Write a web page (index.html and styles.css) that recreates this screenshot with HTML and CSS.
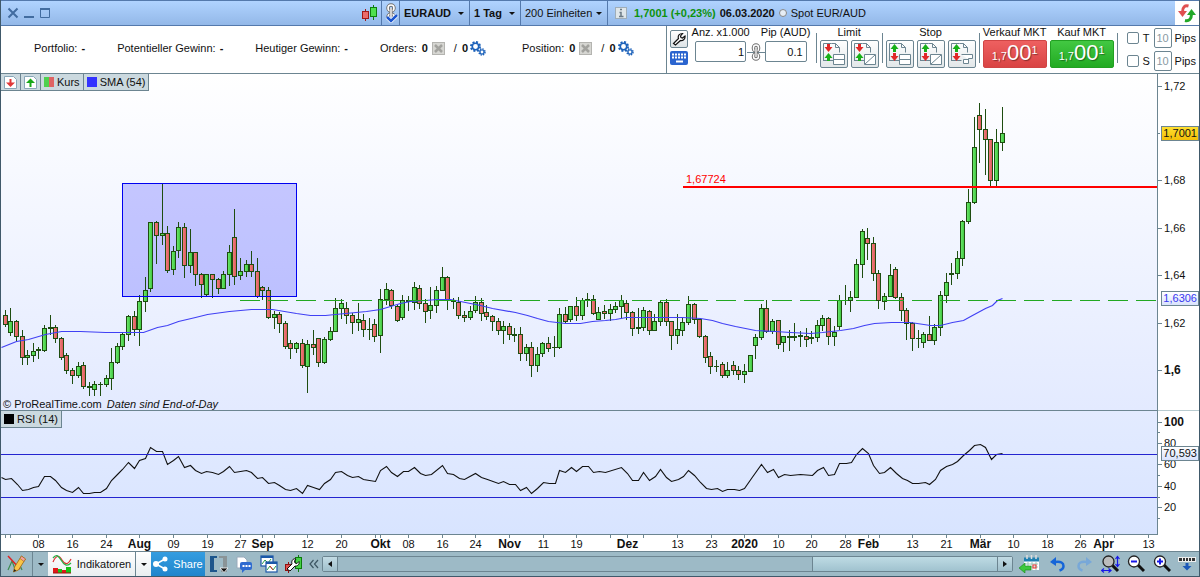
FILE: index.html
```html
<!DOCTYPE html>
<html lang="de">

<head>
    <meta charset="UTF-8">
    <meta name="viewport" content="width=device-width, initial-scale=1.0">
    <title>EURAUD - 1 Tag</title>
    <link rel="stylesheet" href="styles.css">
</head>

<body>
    <div class="window">
        <!-- title bar -->
        <header class="titlebar">
            <div class="win_btns">
                <button aria-label="Schließen"><svg width="12" height="12" viewBox="0 0 12 12"><path d="M1.5 1.5l9 9M10.500 1.500l-9 9" stroke="#426ca0" stroke-width="2"/></svg></button>
                <button aria-label="Minimieren"><svg width="12" height="12" viewBox="0 0 12 12"><path d="M1 10h10" stroke="#426ca0" stroke-width="2"/></svg></button>
                <button aria-label="Maximieren"><svg width="12" height="12" viewBox="0 0 12 12"><path d="M1.500 2v8.500h9V2" fill="none" stroke="#426ca0"/><path d="M1 2h10" stroke="#426ca0" stroke-width="2"/></svg></button>
            </div>
            <svg class="ico_candles" width="18" height="18" viewBox="0 0 18 18">
                <path d="M4.500 5v12" stroke="#a01818"/><rect x="1.500" y="7.500" width="6" height="7" fill="#ea6b6b" stroke="#a01818"/>
                <path d="M12.500 1v15" stroke="#0f7f0f"/><rect x="9.500" y="3.500" width="6" height="9" fill="#4fe04f" stroke="#0f7f0f"/>
            </svg>
            <button class="cell link_cell" aria-label="Verknüpfen">
                <svg width="16" height="20" viewBox="0 0 16 20">
                    <rect x="5" y="2" width="6" height="6" rx="3" fill="none" stroke="#6f6f6f" stroke-width="3.500"/>
                    <rect x="5" y="2" width="6" height="6" rx="3" fill="none" stroke="#fff" stroke-width="1.600"/>
                    <rect x="5" y="11" width="6" height="6" rx="3" fill="none" stroke="#6f6f6f" stroke-width="3.500"/>
                    <rect x="5" y="11" width="6" height="6" rx="3" fill="none" stroke="#fff" stroke-width="1.600"/>
                    <path d="M8 5v9" stroke="#6f6f6f" stroke-width="3"/><path d="M8 5v9" stroke="#fff" stroke-width="1.400"/>
                    <path d="M4 14l4 4 6-6" fill="none" stroke="#fff" stroke-width="4"/>
                    <path d="M4 14l4 4 6-6" fill="none" stroke="#1a55cf" stroke-width="2.500"/>
                </svg>
            </button>
            <button class="cell bold symbol">EURAUD <i class="arrow"></i></button>
            <button class="cell bold period">1 Tag <i class="arrow"></i></button>
            <button class="cell units">200 Einheiten <i class="arrow"></i></button>
            <div class="cell quote">
                <svg width="12" height="12" viewBox="0 0 12 12"><rect x=".5" y=".5" width="11" height="11" fill="#dfe6ea" stroke="#9fadb8"/><path d="M5 2.500h2M4.500 5.500H6v4M4 9.500h4.500" fill="none" stroke="#6b7a85" stroke-width="1.500"/></svg>
                <b class="up">1,7001 (+0,23%)</b>
                <b>06.03.2020</b>
                <i class="dot"></i>
                <span>Spot EUR/AUD</span>
            </div>
            <button class="refresh" aria-label="Aktualisieren">
                <svg width="20" height="20" viewBox="0 0 20 20">
                    <path d="M11.500 3C8 2 5.500 4 5.500 9" fill="none" stroke="#e05050" stroke-width="3"/><path d="M1 8h9l-4.500 6z" fill="#e05050"/>
                    <path d="M8 17.500c4 1 6.500-1.500 6.500-6.500" fill="none" stroke="#22a828" stroke-width="3"/><path d="M10 12h9l-4.500-6z" fill="#22a828"/>
                </svg>
            </button>
        </header>

        <!-- account and order bar -->
        <div class="toolbar">
            <div class="stats">
                <div>Portfolio: <b>-</b></div>
                <div>Potentieller Gewinn: <b>-</b></div>
                <div>Heutiger Gewinn: <b>-</b></div>
                <div class="stat_ico">Orders: <b>0</b>
                    <svg width="13" height="13"><use href="#ico_cancel"/></svg>
                    <span class="slash">/</span><b>0</b><svg class="gears" width="16" height="15"><use href="#ico_gears"/></svg>
                </div>
                <div class="stat_ico">Position: <b>0</b>
                    <svg width="13" height="13"><use href="#ico_cancel"/></svg>
                    <span class="slash">/</span><b>0</b><svg class="gears" width="16" height="15"><use href="#ico_gears"/></svg>
                </div>
            </div>
            <div class="trade">
                <div class="tools">
                    <button class="sq" aria-label="Einstellungen"><svg width="14" height="14" viewBox="0 0 14 14"><path d="M1.500 11.500L6.500 6.500C5.500 3.500 7.500 1.500 10.500 1.500L8.500 4l.5 1.500 1.500.5L13 4c.5 3-2 5-4.500 4.500l-5 4.500z" fill="#fff" stroke="#111" stroke-width="1.200"/></svg></button>
                    <button class="keys" aria-label="Tastatur"><svg width="14" height="10" viewBox="0 0 14 10"><path d="M0 1.500h14M0 4.500h14" stroke="#fff" stroke-width="2" stroke-dasharray="2 1"/><path d="M4 8.500h7" stroke="#fff" stroke-width="2"/></svg></button>
                </div>
                <div class="field qty"><label for="qty">Anz. x1.000</label><input id="qty" type="text" value="1"></div>
                <svg class="chain" width="18" height="20" viewBox="0 0 18 20">
                    <path d="M0 10.500h18" stroke="#6c8591"/>
                    <rect x="6.500" y="3" width="5" height="6" rx="2.500" fill="none" stroke="#6f6f6f" stroke-width="3.500"/><rect x="6.500" y="3" width="5" height="6" rx="2.500" fill="none" stroke="#fff" stroke-width="1.500"/>
                    <rect x="6.500" y="12" width="5" height="5" rx="2.500" fill="none" stroke="#6f6f6f" stroke-width="3.500"/><rect x="6.500" y="12" width="5" height="5" rx="2.500" fill="none" stroke="#fff" stroke-width="1.500"/>
                    <path d="M9 6v8" stroke="#6f6f6f" stroke-width="3"/><path d="M9 6v8" stroke="#fff" stroke-width="1.300"/>
                </svg>
                <div class="field pip"><label for="pip">Pip (AUD)</label><input id="pip" type="text" value="0.1"></div>
                <div class="group">
                    <span class="cap">Limit</span>
                    <div class="row">
                        <button class="ord" aria-label="Limit"><svg viewBox="0 0 26 26"><use href="#ico_page"/><use href="#ico_down_up"/><use href="#ico_line"/></svg></button>
                        <button class="ord" aria-label="Limit diagonal"><svg viewBox="0 0 26 26"><use href="#ico_page"/><use href="#ico_down_up"/><use href="#ico_diag"/></svg></button>
                    </div>
                </div>
                <div class="group">
                    <span class="cap">Stop</span>
                    <div class="row">
                        <button class="ord" aria-label="Stop"><svg viewBox="0 0 26 26"><use href="#ico_page"/><use href="#ico_up_down"/><use href="#ico_line"/></svg></button>
                        <button class="ord" aria-label="Stop diagonal"><svg viewBox="0 0 26 26"><use href="#ico_page"/><use href="#ico_up_down"/><use href="#ico_diag"/></svg></button>
                        <button class="ord" aria-label="Trailing Stop"><svg viewBox="0 0 26 26"><use href="#ico_page"/><use href="#ico_up_down"/><use href="#ico_step"/></svg></button>
                    </div>
                </div>
                <div class="group market">
                    <div class="col">
                        <label class="cap" for="sell">Verkauf MKT</label>
                        <button id="sell" class="mkt sell">1,7<strong>00</strong><sup>1</sup></button>
                    </div>
                    <div class="col">
                        <label class="cap" for="buy">Kauf MKT</label>
                        <button id="buy" class="mkt buy">1,7<strong>00</strong><sup>1</sup></button>
                    </div>
                </div>
                <div class="group pips">
                    <div class="pip_row"><input id="chk_t" type="checkbox"><label for="chk_t">T</label><input id="pip_t" type="text" value="10"><label for="pip_t">Pips</label></div>
                    <div class="pip_row"><input id="chk_s" type="checkbox"><label for="chk_s">S</label><input id="pip_s" type="text" value="10"><label for="pip_s">Pips</label></div>
                </div>
            </div>
        </div>

        <!-- price chart -->
        <section class="panel price">
            <div class="plot">
                <svg id="price_plot" viewBox="1 74 1156 336" preserveAspectRatio="none"></svg>
                <div class="legend">
                    <button aria-label="Nach unten"><svg width="13" height="13" viewBox="0 0 13 13"><path d="M.500.500h9l3 3v9H.500z" fill="#fff" stroke="#89a7b8"/><path d="M6.500 3v5" stroke="#e03838" stroke-width="2"/><path d="M2 6.500h9l-4.500 4.500z" fill="#e03838"/></svg></button>
                    <button aria-label="Nach oben"><svg width="13" height="13" viewBox="0 0 13 13"><path d="M.500.500h9l3 3v9H.500z" fill="#fff" stroke="#89a7b8"/><path d="M6.500 6v5" stroke="#18a818" stroke-width="2"/><path d="M2 7h9L6.500 2.500z" fill="#18a818"/></svg></button>
                    <span><i class="key key_kurs"></i>Kurs</span>
                    <span><i class="key key_sma"></i>SMA (54)</span>
                </div>
                <p class="copy">© ProRealTime.com <em>Daten sind End-of-Day</em></p>
            </div>
            <div class="axis">
                <svg id="price_axis"></svg>
                <span class="tag tag_last">1,7001</span>
                <span class="tag tag_sma">1,6306</span>
            </div>
        </section>

        <!-- RSI -->
        <section class="panel rsi">
            <div class="plot">
                <svg id="rsi_plot" viewBox="1 411 1156 123" preserveAspectRatio="none"></svg>
                <div class="legend"><span><i class="key key_rsi"></i>RSI (14)</span></div>
            </div>
            <div class="axis">
                <svg id="rsi_axis"></svg>
                <span class="tag tag_rsi">70,593</span>
            </div>
        </section>

        <div class="dates"><svg id="date_axis"></svg></div>

        <!-- bottom bar -->
        <footer class="bottombar">
            <button class="draw" aria-label="Zeichnen"><svg width="20" height="18" viewBox="0 0 20 18"><path d="M1 15l4-9 3 8 4-6 3 7" fill="none" stroke="#3c8c50" stroke-width="1.200"/><path d="M1 1l12 13" stroke="#dd2222" stroke-width="1.500"/><path d="M14.500 1l4 3-7 11-5 2 1-5z" fill="#f9c548" stroke="#9a6410" stroke-width=".8"/><path d="M14.500 1l4 3-1.500 2.500-4-3z" fill="#f3a0a0" stroke="#9a6410" stroke-width=".6"/><path d="M6.500 17l.8-3 2 1.500z" fill="#222"/></svg></button>
            <button class="drop" aria-label="Zeichenwerkzeuge"><i class="arrow"></i></button>
            <button class="indi"><svg width="20" height="20" viewBox="0 0 20 20"><path d="M1 8C4 1 7 1 10 6s6 5 9-1" fill="none" stroke="#dd3030" stroke-width="1.200"/><path d="M1 4c3-4 5-3 8 2s6 7 10 3" fill="none" stroke="#28b048" stroke-width="1.300"/><path d="M1 19v-5h5v5M10 19v-3h4v3" fill="#e01818"/><path d="M6 19v-4h4v4M14 19v-6h5v6" fill="#18c018"/><path d="M1 19h18" stroke="#a01010"/></svg>Indikatoren</button>
            <button class="drop light" aria-label="Indikatorliste"><i class="arrow"></i></button>
            <button class="share"><svg width="15" height="16" viewBox="0 0 15 16"><path d="M12 3L3 8l9 5" fill="none" stroke="#fff" stroke-width="1.500"/><circle cx="12" cy="3" r="2.500" fill="#fff"/><circle cx="3" cy="8" r="3" fill="#fff"/><circle cx="12" cy="13" r="2.500" fill="#fff"/></svg>Share</button>
            <div class="icons">
                <button aria-label="Ansicht"><svg width="19" height="18" viewBox="0 0 19 18"><path d="M8 1H1v16h7v-2H5V3h3z" fill="#1d568c"/><path d="M10 1h8v16h-6v-2h2V3h-4z" fill="#8a9497"/><path d="M11 13h8l-4 4.500z" fill="#111" stroke="#fff" stroke-width=".8"/></svg></button>
                <button aria-label="Kommentar"><svg width="16" height="17" viewBox="0 0 16 17"><path d="M1 1h7l3 3v8H1z" fill="#fff" stroke="#9ab"/><rect x="4" y="6" width="12" height="8" rx="2" fill="#2f6bd0"/><path d="M6 13v4l4-4z" fill="#2f6bd0"/><path d="M6.500 10h8" stroke="#fff" stroke-width="2" stroke-dasharray="2 1"/></svg></button>
                <button aria-label="Fenster"><svg width="18" height="18" viewBox="0 0 18 18"><rect x="1" y="1" width="12" height="10" fill="#fff" stroke="#1c58a8" stroke-width="1.200"/><path d="M1 2h12" stroke="#1c58a8" stroke-width="2"/><path d="M2 9l3-4 3 3 3-4" fill="none" stroke="#28a048"/><rect x="6" y="7" width="11" height="10" fill="#fff" stroke="#1c58a8" stroke-width="1.200"/><path d="M6 8h11" stroke="#1c58a8" stroke-width="2"/><path d="M7 15l3-4 3 4 3-4" fill="none" stroke="#28a048"/><path d="M10 11l3 4" stroke="#dd3030"/></svg></button>
                <button aria-label="Handel"><svg width="17" height="18" viewBox="0 0 17 18"><path d="M3.500 7v11" stroke="#901010"/><rect x=".5" y="9.500" width="5" height="6" fill="#e05050" stroke="#901010"/><path d="M13.500 0v17" stroke="#0c7c0c"/><rect x="10.500" y="2.500" width="6" height="11" fill="#45d045" stroke="#0c7c0c"/><path d="M2 14l5-5c-1-3 1-6 4-5L9.500 6l.5 2 2 .5 2-2c1 3-2 5-4 4.500l-5 5z" fill="#fff" stroke="#111"/></svg></button>
                <button class="fold" aria-label="Einklappen"><svg width="10" height="10" viewBox="0 0 10 10"><path d="M4.500 1L1 5l3.500 4M9 1L5.500 5 9 9" fill="none" stroke="#3d5663" stroke-width="1.200"/></svg></button>
            </div>
            <div class="scroll">
                <button aria-label="Zurück"><i class="tri_left"></i></button>
                <div class="track"><div class="thumb"></div></div>
                <button aria-label="Vor"><i class="tri_right"></i></button>
            </div>
            <div class="nav">
                <button aria-label="Datum"><svg width="21" height="18" viewBox="0 0 21 18"><rect x="5" y="3" width="15" height="12" fill="#fff"/><path d="M5 4.500h15" stroke="#2080b0" stroke-width="4"/><path d="M8 0v4M12.500 0v4M17 0v4" stroke="#ddd" stroke-width="1.500"/><path d="M6 9h13M6 12h13M9 7v8M13 7v8M17 7v8" stroke="#8ba" stroke-width=".8"/><rect x="14" y="10" width="3" height="3" fill="none" stroke="#e33"/><path d="M0 13l6-5v3h6v4H6v3z" fill="#3cc83c" stroke="#178817" stroke-width=".6"/></svg></button>
                <button aria-label="Rückgängig"><svg width="16" height="16" viewBox="0 0 16 16"><path d="M5 6c6-1 8.500 1 8.500 4 0 2-1 3.500-4 4.500" fill="none" stroke="#1665d8" stroke-width="2.500"/><path d="M0 6l6-5v9z" fill="#1665d8"/></svg></button>
                <button aria-label="Wiederholen"><svg width="16" height="16" viewBox="0 0 16 16"><path d="M11 6c-6-1-8.500 1-8.500 4 0 2 1 3.500 4 4.500" fill="none" stroke="#78a8d8" stroke-width="2.500"/><path d="M16 6l-6-5v9z" fill="#78a8d8"/></svg></button>
                <button aria-label="Zoom anpassen"><svg width="19" height="18" viewBox="0 0 19 18"><path d="M11 10l6 6" stroke="#111" stroke-width="3"/><circle cx="7.500" cy="6.500" r="5.500" fill="#bcbcbc" stroke="#222" stroke-width="1.300"/><path d="M16.500 2v9M14.500 4l2-2.500 2 2.500M14.500 9l2 2.500 2-2.500M1 15.500h8M3 13.500l-2.500 2 2.500 2M7.500 13.500l2.500 2-2.500 2" fill="none" stroke="#1717e8" stroke-width="1.200"/></svg></button>
                <button aria-label="Verkleinern"><svg width="18" height="18" viewBox="0 0 18 18"><path d="M11 10l6 6" stroke="#111" stroke-width="3"/><circle cx="7" cy="6.500" r="5.500" fill="#fff" stroke="#222" stroke-width="1.300"/><path d="M4 6.500h6" stroke="#1717e8" stroke-width="2"/></svg></button>
                <button aria-label="Vergrößern"><svg width="18" height="18" viewBox="0 0 18 18"><path d="M11 10l6 6" stroke="#111" stroke-width="3"/><circle cx="7" cy="6.500" r="5.500" fill="#fff" stroke="#222" stroke-width="1.300"/><path d="M4 6.500h6M7 3.500v6" stroke="#1717e8" stroke-width="2"/></svg></button>
                <button aria-label="Leiste ausblenden"><svg width="18" height="14" viewBox="0 0 18 14"><rect x=".5" y=".5" width="17" height="4" fill="#333" stroke="#eee"/><path d="M4.500 1v3M7.500 1v3M10.500 1v3M13.500 1v3" stroke="#eee"/><path d="M9 6v4" stroke="#1c58b8" stroke-width="3"/><path d="M4.500 9h9L9 13.500z" fill="#1c58b8"/></svg></button>
            </div>
        </footer>
    </div>

    <!-- shared icons -->
    <svg class="defs" width="0" height="0">
        <defs>
            <symbol id="ico_cancel" viewBox="0 0 13 13"><rect x=".5" y=".5" width="12" height="12" fill="#d6d6d2" stroke="#b4b4b0"/><path d="M3 3l7 7M10 3l-7 7" stroke="#a2a29e" stroke-width="2.500"/></symbol>
            <symbol id="ico_gears" viewBox="0 0 16 15"><circle cx="5.500" cy="5.500" r="4.500" fill="none" stroke="#1d62ba" stroke-width="2" stroke-dasharray="2 1.530"/><circle cx="5.500" cy="5.500" r="3.200" fill="#fff" stroke="#1d62ba" stroke-width="1.600"/><circle cx="12" cy="11" r="3" fill="none" stroke="#1d62ba" stroke-width="1.500" stroke-dasharray="1.400 .95"/><circle cx="12" cy="11" r="2" fill="#fff" stroke="#1d62ba" stroke-width="1.200"/></symbol>
            <g id="ico_page"><path d="M10.500 2.500h4l4 4v5M14.500 2.500v4h4M2.500 20V2.500h8M2.500 19.500h10" fill="none" stroke="#6c8591"/></g>
            <g id="ico_down_up"><path d="M7.500 3v4" stroke="#e02828" stroke-width="3"/><path d="M3.500 6h8l-4 5z" fill="#e02828"/><path d="M7.500 16v4" stroke="#18b018" stroke-width="3"/><path d="M3.500 17h8l-4-5z" fill="#18b018"/></g>
            <g id="ico_up_down"><path d="M7.500 7v4" stroke="#18b018" stroke-width="3"/><path d="M3.500 8h8l-4-5z" fill="#18b018"/><path d="M7.500 12v4" stroke="#e02828" stroke-width="3"/><path d="M3.500 15h8l-4 5z" fill="#e02828"/></g>
            <g id="ico_line"><path d="M12.500 13.500h11v10h-11zM12 18.500h12" fill="#fff" stroke="#6c8591"/></g>
            <g id="ico_diag"><path d="M12.500 13.500h11v10h-11zM13 23L23 14" fill="#fff" stroke="#6c8591"/></g>
            <g id="ico_step"><path d="M12.500 13.500h11v4h-4v5h-5v-4h5" fill="#fff" stroke="#6c8591"/></g>
        </defs>
    </svg>
    <script src="chart.js"></script>
</body>

</html>
```
FILE: styles.css
```css
* {
    box-sizing: border-box;
    margin: 0;
    padding: 0;
}

body {
    font-family: "Liberation Sans", Arial, sans-serif;
    font-size: 11px;
    line-height: 13px;
    color: #111;
    background-color: #fff;
}

button,
input {
    font: inherit;
    color: inherit;
}

button {
    display: flex;
    align-items: center;
    justify-content: center;
    border: 0;
    background: none;
    white-space: nowrap;
}

svg {
    display: block;
    flex-shrink: 0;
}

.defs {
    position: absolute;
}

.window {
    display: flex;
    flex-direction: column;
    min-height: 100vh;
    border-left: 1px solid #40596a;
    border-right: 1px solid #40596a;
}

.arrow {
    border: 3px solid transparent;
    border-top-color: #111;
    border-bottom: 0;
}

/* title bar */
.titlebar {
    display: flex;
    height: 26px;
    border-top: 1px solid #5479ac;
    border-bottom: 1px solid #5479ac;
    background-image: linear-gradient(#b0d3ff, #93b8e8);
}

.win_btns {
    display: flex;
    align-items: center;
    gap: 4px;
    padding-left: 6px;
    flex: 1;
}

.ico_candles {
    margin: 3px 2px 0 0;
}

.cell {
    border-left: 1px solid #5479ac;
    padding: 0 5px 0 4px;
    justify-content: space-between;
}

.link_cell {
    width: 18px;
    padding: 0;
    justify-content: center;
}

.bold {
    font-weight: bold;
}

.symbol {
    width: 70px;
}

.period {
    width: 51px;
}

.units {
    width: 87px;
}

.quote {
    display: flex;
    align-items: center;
    justify-content: flex-start;
    gap: 4px;
    width: 568px;
    padding-left: 7px;
}

.quote .up {
    color: #0d920d;
    padding-left: 3px;
}

.dot {
    width: 8px;
    height: 8px;
    border: 1px solid #888;
    border-radius: 50%;
    background-color: #e6edf5;
}

.refresh {
    width: 24px;
    background-color: #fff;
}

/* order bar */
.toolbar {
    display: flex;
    justify-content: space-between;
    height: 48px;
    border-bottom: 1px solid #6c8591;
}

.stats {
    display: flex;
    align-items: center;
    gap: 32px;
    padding: 0 0 2px 33px;
    white-space: nowrap;
}

.stats b {
    margin-left: 1px;
}

.stat_ico {
    display: flex;
    align-items: center;
    gap: 4px;
}

.stat_ico + .stat_ico {
    margin-left: 4px;
}

.slash {
    margin-left: 5px;
}

.stat_ico .gears {
    margin-left: -2px;
}

.trade {
    display: flex;
    border-left: 1px solid #6c8591;
    padding-left: 3px;
    white-space: nowrap;
}

.tools {
    display: flex;
    flex-direction: column;
    gap: 3px;
    width: 18px;
    margin-right: 3px;
    padding-top: 4px;
}

.sq {
    height: 18px;
    border: 1px solid #6c8591;
    border-radius: 2px;
    background-image: linear-gradient(#fff, #dde3e6);
}

.keys {
    height: 14px;
    border-radius: 2px;
    background-color: #2a64cf;
}

.field {
    display: flex;
    flex-direction: column;
    align-items: center;
    gap: 2px;
}

.field input {
    height: 21px;
    border: 1px solid #6c8591;
    border-radius: 2px;
    text-align: right;
    padding-right: 3px;
}

.field.qty {
    width: 60px;
}

.field.qty input {
    width: 51px;
    padding-right: 1px;
}

.field.pip {
    width: 50px;
}

.field.pip input {
    width: 42px;
}

.chain {
    margin: 16px -4px 0;
}

.group {
    position: relative;
    display: flex;
    flex-direction: column;
    gap: 1px;
    padding: 0 3px;
    margin-left: 1px;
}

.pip + .group {
    margin-left: 6px;
}

/* divider left of each group */
.group::before {
    content: "";
    position: absolute;
    left: -1px;
    top: 7px;
    bottom: 10px;
    width: 1px;
    background-color: #6c8591;
}

.cap {
    text-align: center;
}

.row {
    display: flex;
    gap: 3px;
}

.ord {
    width: 28px;
    height: 28px;
    border: 1px solid #6c8591;
    border-radius: 2px;
    background-image: linear-gradient(#fff, #e2e7e9);
}

.ord svg {
    width: 26px;
    height: 26px;
}

.group.market {
    flex-direction: row;
    gap: 3px;
}

.col {
    display: flex;
    flex-direction: column;
    gap: 1px;
    width: 64px;
    align-items: center;
}

.mkt {
    width: 64px;
    height: 28px;
    align-items: baseline;
    border-radius: 2px;
    color: #fff;
    text-shadow: 1px 1px 1px rgba(0, 0, 0, 0.4);
}

.mkt strong {
    font-size: 22px;
    line-height: 24px;
    font-weight: normal;
}

.mkt sup {
    align-self: flex-start;
    padding-top: 3px;
    font-size: 11px;
}

.sell {
    border: 1px solid #d04545;
    background-image: linear-gradient(#ee6060, #d94444);
}

.buy {
    border: 1px solid #22a022;
    background-image: linear-gradient(#42c842, #22aa22);
}

.group.pips {
    gap: 3px;
    padding: 2px 3px 0 9px;
}

.pip_row {
    display: flex;
    align-items: center;
    gap: 3px;
    height: 20px;
}

.pip_row input[type="checkbox"] {
    appearance: none;
    width: 12px;
    height: 12px;
    border: 1px solid #6c8591;
    border-radius: 2px;
}

.pip_row input[type="text"] {
    width: 18px;
    height: 20px;
    border: 1px solid #6c8591;
    border-radius: 2px;
    color: #8a9aa3;
    text-align: center;
}

.pip_row label:first-of-type {
    width: 9px;
    text-align: center;
}

/* chart panels */
.panel {
    display: grid;
    grid-template-columns: 1fr 41px;
    min-height: 0;
}

.price {
    flex: 337 1 0;
}

.rsi {
    flex: 124 1 0;
}

.plot {
    position: relative;
    border-right: 1px solid #6c8591;
    border-bottom: 1px solid #6c8591;
}

.price .plot {
    background-image: linear-gradient(#fff, #e3eaff);
}

.rsi .plot {
    background-image: linear-gradient(#e3ebff, #d8e4ff);
}

.plot > svg,
.axis > svg,
.dates > svg {
    position: absolute;
    width: 100%;
    height: 100%;
}

.axis {
    position: relative;
    margin-bottom: 1px;
}

.price .axis {
    margin-bottom: 0;
    border-bottom: 1px solid #b8cbd0;
}

.axis text,
.dates text {
    font-size: 11px;
    fill: #111;
}

.axis .major,
.dates .major {
    font-size: 12px;
    font-weight: bold;
}

.dates text {
    text-anchor: middle;
}

.price_level {
    font-size: 11px;
    fill: #f00;
}

.legend {
    position: absolute;
    top: 0;
    left: 0;
    display: flex;
}

.legend > * {
    display: flex;
    align-items: center;
    height: 17px;
    padding: 0 3px;
    border-right: 1px solid #6c8591;
    border-bottom: 1px solid #6c8591;
    background-color: #cbd9df;
}

.key {
    width: 10px;
    height: 10px;
    margin-right: 3px;
}

.key_kurs {
    background-image: linear-gradient(90deg, #4fd04f 50%, #df6464 50%);
}

.key_sma {
    background-color: #3333ff;
}

.key_rsi {
    background-color: #000;
}

.copy {
    position: absolute;
    left: 2px;
    bottom: -1px;
}

.copy em {
    margin-left: 2px;
}

.tag {
    position: absolute;
    right: 0;
    height: 15px;
    padding: 0 1px;
    border: 1px solid #6c8591;
    background-image: linear-gradient(#fff, #d8e2fc);
}

.tag_last {
    top: 15.5%;
    background-image: linear-gradient(#ffdf30, #f3bf08);
}

.tag_sma {
    top: 64.6%;
    color: #3838f0;
}

.tag_rsi {
    top: 28.5%;
}

.dates {
    position: relative;
    height: 17px;
    margin-right: 41px;
}

/* bottom bar */
.bottombar {
    display: flex;
    height: 26px;
    margin-top: -1px;
    border-top: 1px solid #6c8591;
    border-bottom: 1px solid #40596a;
    background-color: #9dbac6;
    position: relative;
}

.draw {
    width: 32px;
    border-right: 1px solid #6c8591;
}

.drop {
    width: 15px;
}

.indi {
    width: 88px;
    gap: 5px;
    border-right: 1px solid #6c8591;
}

.indi,
.light {
    background-image: linear-gradient(#fff, #e9eef0);
}

.share {
    width: 54px;
    gap: 5px;
    color: #fff;
    background-image: linear-gradient(#359de0, #2085cc);
}

.icons {
    display: flex;
    padding-left: 1px;
}

.icons button {
    width: 25px;
}

.icons .fold {
    width: 16px;
}

.scroll {
    display: flex;
    flex: 1;
    height: 16px;
    margin: 4px 0 0;
    border: 1px solid #6c8591;
    border-radius: 2px;
}

.scroll button {
    width: 14px;
    background-image: linear-gradient(#c2dbe4, #9fbfcb);
}

.tri_left {
    border: 3px solid transparent;
    border-right: 4px solid #111;
    border-left: 0;
}

.tri_right {
    border: 3px solid transparent;
    border-left: 4px solid #111;
    border-right: 0;
}

.track {
    display: flex;
    justify-content: flex-end;
    flex: 1;
    border-left: 1px solid #6c8591;
    border-right: 1px solid #6c8591;
}

.thumb {
    width: 28%;
    border-left: 1px solid #6c8591;
    background-image: linear-gradient(#bedbe4, #a0c2cf);
}

.nav {
    display: flex;
}

.nav button {
    width: 26px;
}

.nav button:first-child {
    width: 32px;
}

.nav button:last-child {
    width: 24px;
}
```
FILE: chart.js
```js
// candles: direction (1 up, 0 down), high, body top, body bottom, low
const candles = [
    [0,310,315,324,326],[1,308,321,332,335],[0,320,321,336,340],[0,330,336,357,364],[1,350,355,357,364],
    [1,343,351,355,361],[0,347,349,350,358],[1,325,328,350,351],[0,315,327,328,334],[0,325,327,338,342],
    [0,337,338,357,359],[0,353,355,370,373],[0,368,370,375,383],[1,362,366,375,377],[0,362,365,386,388],
    [0,382,386,387,395],[1,381,384,389,395],[0,382,384,384,395],[1,375,378,384,386],[1,348,362,378,389],
    [1,343,346,362,363],[1,333,334,346,349],[1,315,316,334,340],[0,311,316,329,335],[1,295,301,329,345],
    [1,277,290,301,311],[1,222,222,288,291],[0,221,222,235,263],[1,184,233,235,244],[0,226,233,270,272],
    [1,246,251,269,274],[1,222,227,250,257],[0,223,227,265,277],[1,229,252,265,272],[0,252,252,274,285],
    [0,273,274,284,297],[1,274,274,294,296],[0,274,274,279,297],[0,278,279,288,293],[1,271,274,288,288],
    [1,245,252,274,285],[0,209,237,276,284],[1,258,271,275,279],[1,260,264,271,276],[0,251,264,271,276],
    [0,258,271,296,297],[0,286,287,290,299],[0,287,290,317,318],[1,311,314,317,328],[0,312,314,323,332],
    [0,321,323,346,348],[0,340,343,348,358],[1,342,343,348,352],[0,339,343,365,367],[1,340,344,366,392],
    [0,330,344,347,354],[0,338,338,362,366],[1,337,339,362,363],[1,327,331,339,340],[1,298,308,331,331],
    [1,299,303,308,318],[0,302,308,315,323],[0,313,315,322,333],[1,303,319,322,330],[0,314,320,329,336],
    [0,318,329,329,339],[0,319,324,336,341],[1,289,299,335,352],[1,283,289,299,304],[0,289,290,305,308],
    [0,305,306,320,321],[1,295,300,317,319],[0,296,300,301,310],[1,282,287,302,309],[0,285,288,303,308],
    [0,299,303,311,322],[1,287,305,310,318],[1,286,290,305,312],[1,267,277,290,290],[0,276,277,299,309],
    [0,298,300,301,308],[0,297,302,315,318],[0,311,315,317,321],[1,306,311,317,319],[1,296,302,310,312],
    [0,298,302,313,320],[0,305,312,316,319],[0,315,316,321,330],[0,318,321,330,334],[1,321,326,330,343],
    [0,323,326,334,339],[0,328,334,335,341],[0,327,334,353,360],[1,344,347,353,360],[0,342,347,365,376],
    [1,347,354,365,371],[1,342,343,353,356],[0,337,343,348,351],[1,336,347,347,356],[1,308,314,347,348],
    [0,307,314,321,322],[1,306,306,319,321],[0,297,306,315,320],[1,298,300,315,319],[0,293,299,300,306],
    [0,295,299,313,314],[1,307,312,319,319],[0,305,311,313,318],[1,304,309,313,320],[1,302,306,309,312],
    [1,295,300,306,317],[0,300,303,312,319],[0,311,312,328,335],[0,308,327,328,333],[1,307,310,327,330],
    [0,310,311,330,334],[1,314,321,330,330],[1,300,302,321,325],[0,299,302,321,325],[0,321,321,335,349],
    [1,314,329,335,343],[1,317,322,330,335],[1,296,304,322,324],[0,303,304,319,323],[0,319,319,336,337],
    [0,335,336,357,362],[0,352,356,366,373],[0,360,366,366,371],[0,362,364,375,377],[1,362,370,375,377],
    [0,361,365,370,374],[0,366,370,374,379],[1,364,371,374,382],[1,355,355,371,371],[1,334,337,345,358],
    [1,304,308,337,339],[0,300,308,331,332],[1,319,321,331,333],[0,320,320,344,348],[1,336,336,342,351],
    [0,330,336,337,350],[0,323,336,337,340],[1,331,335,336,346],[0,328,336,339,346],[0,331,337,338,343],
    [1,320,325,337,341],[1,315,318,325,330],[0,317,318,336,344],[1,326,332,336,345],[1,295,300,326,329],
    [0,285,300,300,304],[1,291,297,300,311],[1,259,264,297,297],[1,229,231,264,277],[0,228,238,243,259],
    [0,237,243,273,280],[0,270,273,300,308],[1,293,296,301,309],[1,264,275,296,296],[0,267,269,297,298],
    [0,293,297,310,320],[0,308,310,323,339],[0,322,323,338,350],[0,330,338,338,347],[1,332,334,342,347],
    [0,316,334,340,340],[1,324,327,340,344],[1,291,295,327,335],[1,273,282,295,302],[0,263,273,274,284],
    [1,251,258,273,278],[1,220,221,258,265],[1,189,202,221,223],[1,117,147,202,203],[0,103,115,129,162],
    [0,109,129,139,174],[0,139,139,180,186],[1,129,142,180,186],[1,107,133,142,150]
];

const sma = "1,347 16,341 28,339 45,334 61,331 80,331 105,332 143,332 157,327 167,325 178,321 195,317 207,314 229,311 251,309 272,309 296,313 310,315 325,315 345,313 366,311 380,309 400,303 410,301 425,300 437,299 450,299 460,301 480,305 492,308 515,312 527,315 537,318 548,321 565,323 580,323 592,321 605,320 615,319 626,317 640,317 660,317 682,317 700,318 712,320 722,323 735,326 755,330 775,331 790,332 810,333 822,332 840,330 853,328 864,325 874,323 891,322 910,322 930,325 940,325 952,322 963,320 972,315 985,308 992,305 997,300 1002,298";

const rsi = "1,477 5,479 11,478 17,484 22,490 28,489 33,487 38,486 44,476 50,476 55,480 61,487 66,490 72,492 78,487 83,493 89,493 94,492 100,492 106,488 111,480 117,474 122,469 128,462 134,468 139,460 145,458 150,447 156,451 162,451 167,464 173,460 178,456 184,467 190,465 195,470 201,473 206,471 212,472 218,474 223,471 229,466 234,472 240,471 246,470 251,472 257,478 262,477 268,483 274,482 279,485 285,489 290,490 296,488 302,493 307,485 313,487 319,489 324,483 330,479 335,472 341,471 347,475 352,477 358,476 363,479 369,480 375,481 380,470 386,466 391,472 397,476 403,471 408,471 414,467 420,473 425,475 431,474 442,465 447,473 453,474 459,478 464,479 475,473 481,477 487,479 498,483 503,481 509,484 515,484 520,490 526,487 531,493 537,488 543,482 549,483 555,483 559,470 565,472 571,467 576,471 582,466 588,466 593,472 599,471 605,472 621,467 627,473 632,480 638,480 643,472 649,480 655,476 660,469 666,477 671,481 678,479 683,476 688,470 694,475 700,482 706,488 711,489 717,488 722,491 727,489 734,489 739,490 744,488 751,478 761,464 767,472 773,469 778,477 784,474 790,475 800,474 812,475 817,470 823,467 828,475 834,474 839,463 846,463 851,462 856,454 862,448 868,453 873,465 879,473 884,472 890,467 896,473 902,478 907,480 912,483 918,483 925,482 929,484 935,479 940,470 946,466 952,464 957,461 963,455 969,450 974,445 980,444 985,447 991,459 996,454 1002,453";

const priceTicks = [[86, "1,72"], [133, ""], [180, "1,68"], [228, "1,66"], [275, "1,64"], [323, "1,62"], [370, "1,6", true]];
const rsiTicks = [[422, "100", true], [432], [443, "80"], [464, "60"], [475], [486, "40"], [497], [507, "20"], [518]];

const dateTicks = [
    [5], [10], [38, "08"], [72, "16"], [106, "24"], [139, "Aug", true], [173, "09"], [207, "19"], [240, "27"],
    [262, "Sep", true], [274], [307, "12"], [341, "20"], [375], [380, "Okt", true], [408, "08"], [442, "16"],
    [475, "24"], [509, "Nov", true], [543, "11"], [576, "19"], [610], [627, "Dez", true], [643], [677, "13"],
    [711, "23"], [744, "2020", true], [778, "10"], [811, "20"], [845, "28"], [868, "Feb", true], [879],
    [912, "13"], [946, "21"], [980, "Mär", true], [1013, "10"], [1047, "18"], [1080, "26"], [1103, "Apr", true],
    [1114], [1148, "13"]
];

function add(parent, name, attrs, text) {
    const el = document.createElementNS("http://www.w3.org/2000/svg", name);
    for (const key in attrs) el.setAttribute(key, attrs[key]);
    if (text) el.textContent = text;
    parent.appendChild(el);
    return el;
}

function gradient(svg, id, from, to) {
    const g = add(svg, "linearGradient", { id: id });
    add(g, "stop", { offset: 0, "stop-color": from });
    add(g, "stop", { offset: 1, "stop-color": to });
}

function drawPrice() {
    const svg = document.getElementById("price_plot");
    gradient(svg, "up", "#6ae66a", "#42c942");
    gradient(svg, "down", "#f07c7c", "#dc5c5c");

    add(svg, "rect", { x: 122, y: 183, width: 175, height: 114, fill: "#0000ff", "fill-opacity": 0.2 });

    candles.forEach(function (c, i) {
        const x = Math.floor(5.3 + 5.6 * i);
        const h = c[3] - c[2] + 1;
        add(svg, "rect", { x: x, y: c[1], width: 1, height: c[4] - c[1] + 1, fill: "#1e4d10" });
        add(svg, "rect", { x: x - 2, y: c[2], width: 5, height: h, fill: "#1e4d10" });
        if (h > 2) {
            add(svg, "rect", { x: x - 1, y: c[2] + 1, width: 3, height: h - 2, fill: c[0] ? "url(#up)" : "url(#down)" });
        }
    });

    add(svg, "polyline", { points: sma, fill: "none", stroke: "#4040f4", "stroke-width": 1.2, transform: "translate(0.5 0.5)" });
    add(svg, "path", { d: "M240 300.5H1157", stroke: "#22a822", "stroke-dasharray": "20 8" });
    add(svg, "rect", { x: 122.5, y: 183.5, width: 174, height: 113, fill: "none", stroke: "#0000f0" });
    add(svg, "path", { d: "M683 187H1157", stroke: "#ff0000", "stroke-width": 2 });
    add(svg, "text", { x: 686, y: 183, "class": "price_level" }, "1,67724");
}

function drawRsi() {
    const svg = document.getElementById("rsi_plot");
    add(svg, "polyline", { points: rsi, fill: "none", stroke: "#111", "stroke-width": 1.1, transform: "translate(0.5 0.5)" });
    add(svg, "path", { d: "M1 454.5H1157M1 497.5H1157", stroke: "#2424d0" });
}

// vertical axis, positions in percent of the panel height
function drawAxis(id, ticks, top, height) {
    const svg = document.getElementById(id);
    ticks.forEach(function (t) {
        const y = (t[0] - top + 0.5) / height * 100 + "%";
        add(svg, "line", { x1: 0, x2: t[1] ? 4 : 2, y1: y, y2: y, stroke: "#6c8591" });
        if (t[1]) add(svg, "text", { x: 6, y: y, dy: 3, "class": t[2] ? "major" : "" }, t[1]);
    });
}

function drawDates() {
    const svg = document.getElementById("date_axis");
    dateTicks.forEach(function (t) {
        const x = (t[0] - 0.5) / 1157 * 100 + "%";
        add(svg, "line", { x1: x, x2: x, y1: 0, y2: 3, stroke: "#6c8591" });
        if (t[1]) add(svg, "text", { x: x, y: 13, "class": t[2] ? "major" : "" }, t[1]);
    });
}

drawPrice();
drawRsi();
drawAxis("price_axis", priceTicks, 74, 336);
drawAxis("rsi_axis", rsiTicks, 411, 123);
drawDates();
```
